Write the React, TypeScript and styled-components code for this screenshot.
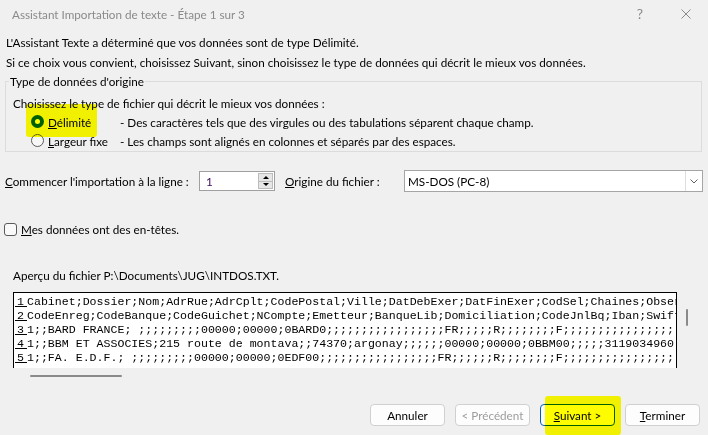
import React from "react";
import styled, { createGlobalStyle } from "styled-components";

const GlobalStyle = createGlobalStyle`
  html, body {
    margin: 0;
    padding: 0;
    background: #f0f0f0;
  }
`;

const Window = styled.div`
  position: relative;
  width: 708px;
  height: 435px;
  background: #f0f0f0;
  font-family: "Lato", "Noto Sans", sans-serif;
  font-size: 11.7px;
  color: #000;
  display: flex;
  flex-direction: column;
  overflow: hidden;
  white-space: nowrap;
`;

const TitleBar = styled.div`
  height: 27px;
  display: flex;
  align-items: center;
  padding-left: 12px;
  color: #8a8a8a;
  flex-shrink: 0;
`;

const TitleControls = styled.div`
  margin-left: auto;
  display: flex;
  align-items: center;
  gap: 35px;
  padding-right: 17px;
`;

const HelpGlyph = styled.span`
  width: 12px;
  text-align: center;
  font-size: 14px;
  color: #8a8a8a;
`;

const Intro = styled.div`
  margin-top: 5px;
  padding-left: 6px;
  line-height: 20px;
`;

const Key = styled.span`
  text-decoration: underline;
`;

const GroupBox = styled.fieldset`
  margin: 1px 6px 0 5px;
  padding: 0 0 1px 7px;
  border: 1px solid #dcdcdc;
  min-width: 0;
`;

const GroupTitle = styled.legend`
  margin-left: -4px;
  padding: 0 1px;
  line-height: 16px;
`;

const GroupHint = styled.div`
  margin-top: 6px;
  line-height: 17px;
`;

const RadioRow = styled.div`
  display: flex;
  align-items: center;
  height: 19px;
  padding-left: 18px;
`;

const RadioLabel = styled.label`
  display: flex;
  align-items: center;
  gap: 4px;
  width: 89px;
  flex-shrink: 0;
`;

const Radio = styled.span<{ $checked?: boolean }>`
  position: relative;
  width: 13px;
  height: 13px;
  box-sizing: border-box;
  border-radius: 50%;
  flex-shrink: 0;
  border: ${(p) => (p.$checked ? "none" : "1px solid #5a5a5a")};
  background: ${(p) => (p.$checked ? "#005fb8" : "#f7f7f7")};

  &::after {
    content: "";
    display: ${(p) => (p.$checked ? "block" : "none")};
    position: absolute;
    left: 4px;
    top: 4px;
    width: 5px;
    height: 5px;
    border-radius: 50%;
    background: #fff;
  }
`;

const FieldRow = styled.div`
  margin-top: 18px;
  height: 22px;
  display: flex;
  align-items: center;
  padding-left: 5px;
`;

const FieldLabel = styled.label<{ $width: number }>`
  width: ${(p) => p.$width}px;
  flex-shrink: 0;
`;

const Spinner = styled.div`
  width: 76px;
  height: 20px;
  box-sizing: border-box;
  border: 1px solid #a0a0a0;
  background: #fff;
  display: flex;
  align-items: center;
  margin-right: 10px;
  flex-shrink: 0;
`;

const SpinValue = styled.span`
  flex: 1;
  padding-left: 6px;
  color: #3b0a5a;
`;

const SpinButtons = styled.div`
  width: 15px;
  height: 16px;
  margin-right: 1px;
  display: flex;
  flex-direction: column;
`;

const SpinButton = styled.div<{ $down?: boolean }>`
  flex: 1;
  box-sizing: border-box;
  border: 1px solid #bcbcbc;
  border-top: ${(p) => (p.$down ? "none" : "1px solid #bcbcbc")};
  background: #e6e6e6;
  display: flex;
  align-items: center;
  justify-content: center;

  &::after {
    content: "";
    border-left: 3px solid transparent;
    border-right: 3px solid transparent;
    ${(p) =>
      p.$down ? "border-top: 3px solid #000;" : "border-bottom: 3px solid #000;"}
  }
`;

const Select = styled.div`
  width: 299px;
  height: 22px;
  box-sizing: border-box;
  border: 1px solid #a5a5a5;
  background: #fff;
  display: flex;
  align-items: center;
`;

const SelectValue = styled.span`
  flex: 1;
  padding-left: 3px;
`;

const SelectArrow = styled.div`
  width: 16px;
  height: 20px;
  border-left: 1px solid #dedede;
  display: flex;
  align-items: center;
  justify-content: center;
`;

const CheckRow = styled.label`
  margin-top: 29px;
  height: 16px;
  display: flex;
  align-items: center;
  gap: 4px;
  padding-left: 4px;
`;

const CheckBox = styled.span`
  width: 13px;
  height: 13px;
  box-sizing: border-box;
  border: 1px solid #5a5a5a;
  border-radius: 3px;
  background: #f9f9f9;
`;

const PreviewCaption = styled.div`
  margin-top: 30px;
  padding-left: 13px;
  line-height: 16px;
`;

const PreviewArea = styled.div`
  margin-top: 9px;
  padding-left: 13px;
  display: flex;
`;

const PreviewBox = styled.div`
  width: 664px;
  height: 76px;
  box-sizing: border-box;
  border: 1px solid #000;
  border-bottom: none;
  background: #fff;
  padding-top: 2px;
  overflow: hidden;
  font-family: "Liberation Mono", monospace;
  font-size: 11.6px;
`;

const PreviewRow = styled.div`
  display: flex;
  height: 14px;
  line-height: 14px;
  white-space: pre;
`;

const RowNum = styled.span`
  width: 13px;
  flex-shrink: 0;
  text-align: center;
  background: linear-gradient(#000, #000) no-repeat 1px 11px / 12px 1px;
`;

const VScroll = styled.div`
  width: 25px;
`;

const VThumb = styled.div`
  margin: 17px 0 0 9px;
  width: 2px;
  height: 17px;
  border-radius: 1px;
  background: #8a8a8a;
`;

const HThumb = styled.div`
  margin: 7px 0 0 30px;
  width: 92px;
  height: 2px;
  border-radius: 1px;
  background: #8a8a8a;
`;

const ButtonBar = styled.div`
  margin-top: auto;
  padding: 0 8px 9px 0;
  display: flex;
  justify-content: flex-end;
  gap: 10px;
`;

const DialogButton = styled.button<{ $primary?: boolean }>`
  width: 75px;
  height: 22px;
  box-sizing: border-box;
  padding: 0;
  border-radius: 4px;
  border: 1px solid ${(p) => (p.$primary ? "#005fb8" : "#d0d0d0")};
  background: #fdfdfd;
  font-family: inherit;
  font-size: inherit;
  color: #000;

  &:disabled {
    color: #9d9d9d;
  }
`;

const Highlight = styled.div<{ $x: number; $y: number; $w: number; $h: number }>`
  position: absolute;
  left: ${(p) => p.$x}px;
  top: ${(p) => p.$y}px;
  width: ${(p) => p.$w}px;
  height: ${(p) => p.$h}px;
  background: #ffff00;
  mix-blend-mode: multiply;
  border-radius: 3px;
  pointer-events: none;
`;

const semis = (n: number) => ";".repeat(n);

const rows = [
  "Cabinet;Dossier;Nom;AdrRue;AdrCplt;CodePostal;Ville;DatDebExer;DatFinExer;CodSel;Chaines;Observations",
  "CodeEnreg;CodeBanque;CodeGuichet;NCompte;Emetteur;BanqueLib;Domiciliation;CodeJnlBq;Iban;Swift",
  "1;;BARD FRANCE; ;;;;;;;;;00000;00000;0BARD0;" + semis(16) + "FR;;;;;R;;;;;;;;F" + semis(20),
  "1;;BBM ET ASSOCIES;215 route de montava;;74370;argonay;;;;;;00000;00000;0BBM00;;;;;3119034960;",
  "1;;FA. E.D.F.; ;;;;;;;;;00000;00000;0EDF00;" + semis(16) + "FR;;;;;;R;;;;;;;;F" + semis(20),
];

const App: React.FC = () => {
  return (
    <Window>
      <GlobalStyle />
      <TitleBar>
        Assistant Importation de texte - Étape 1 sur 3
        <TitleControls>
          <HelpGlyph>?</HelpGlyph>
          <svg width="10" height="10" viewBox="0 0 10 10">
            <path d="M0.5 0.5 L9.5 9.5 M9.5 0.5 L0.5 9.5" stroke="#8a8a8a" strokeWidth="1" />
          </svg>
        </TitleControls>
      </TitleBar>

      <Intro>
        <div>L'Assistant Texte a déterminé que vos données sont de type Délimité.</div>
        <div>
          Si ce choix vous convient, choisissez Suivant, sinon choisissez le type de données qui décrit le
          mieux vos données.
        </div>
      </Intro>

      <GroupBox>
        <GroupTitle>Type de données d'origine</GroupTitle>
        <GroupHint>Choisissez le type de fichier qui décrit le mieux vos données :</GroupHint>
        <RadioRow>
          <RadioLabel>
            <Radio $checked />
            <span>
              <Key>D</Key>élimité
            </span>
          </RadioLabel>
          - Des caractères tels que des virgules ou des tabulations séparent chaque champ.
        </RadioRow>
        <RadioRow>
          <RadioLabel>
            <Radio />
            <span>
              <Key>L</Key>argeur fixe
            </span>
          </RadioLabel>
          - Les champs sont alignés en colonnes et séparés par des espaces.
        </RadioRow>
      </GroupBox>

      <FieldRow>
        <FieldLabel $width={194}>
          <Key>C</Key>ommencer l'importation à la ligne :
        </FieldLabel>
        <Spinner>
          <SpinValue>1</SpinValue>
          <SpinButtons>
            <SpinButton />
            <SpinButton $down />
          </SpinButtons>
        </Spinner>
        <FieldLabel $width={119}>
          <Key>O</Key>rigine du fichier :
        </FieldLabel>
        <Select>
          <SelectValue>MS-DOS (PC-8)</SelectValue>
          <SelectArrow>
            <svg width="8" height="5" viewBox="0 0 8 5">
              <path d="M0.5 0.5 L4 4 L7.5 0.5" fill="none" stroke="#606060" strokeWidth="1" />
            </svg>
          </SelectArrow>
        </Select>
      </FieldRow>

      <CheckRow>
        <CheckBox />
        <span>
          <Key>M</Key>es données ont des en-têtes.
        </span>
      </CheckRow>

      <PreviewCaption>Aperçu du fichier P:\Documents\JUG\INTDOS.TXT.</PreviewCaption>
      <PreviewArea>
        <PreviewBox>
          {rows.map((r, i) => (
            <PreviewRow key={i}>
              <RowNum>{i + 1}</RowNum>
              {r}
            </PreviewRow>
          ))}
        </PreviewBox>
        <VScroll>
          <VThumb />
        </VScroll>
      </PreviewArea>
      <HThumb />

      <ButtonBar>
        <DialogButton>Annuler</DialogButton>
        <DialogButton disabled>&lt; Précédent</DialogButton>
        <DialogButton $primary>
          <Key>S</Key>uivant &gt;
        </DialogButton>
        <DialogButton>
          <Key>T</Key>erminer
        </DialogButton>
      </ButtonBar>

      <Highlight $x={26} $y={104} $w={71} $h={33} />
      <Highlight $x={545} $y={396} $w={76} $h={39} />
    </Window>
  );
};

export default App;
